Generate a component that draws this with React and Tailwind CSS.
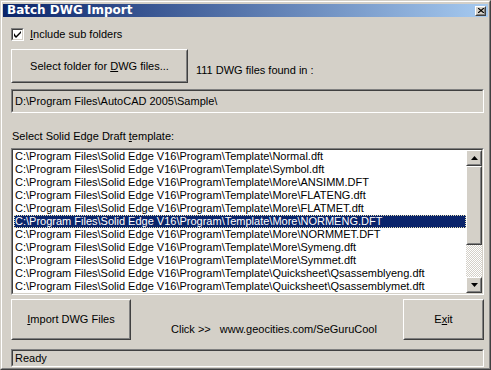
import React from 'react';

const files = [
  'C:\\Program Files\\Solid Edge V16\\Program\\Template\\Normal.dft',
  'C:\\Program Files\\Solid Edge V16\\Program\\Template\\Symbol.dft',
  'C:\\Program Files\\Solid Edge V16\\Program\\Template\\More\\ANSIMM.DFT',
  'C:\\Program Files\\Solid Edge V16\\Program\\Template\\More\\FLATENG.dft',
  'C:\\Program Files\\Solid Edge V16\\Program\\Template\\More\\FLATMET.dft',
  'C:\\Program Files\\Solid Edge V16\\Program\\Template\\More\\NORMENG.DFT',
  'C:\\Program Files\\Solid Edge V16\\Program\\Template\\More\\NORMMET.DFT',
  'C:\\Program Files\\Solid Edge V16\\Program\\Template\\More\\Symeng.dft',
  'C:\\Program Files\\Solid Edge V16\\Program\\Template\\More\\Symmet.dft',
  'C:\\Program Files\\Solid Edge V16\\Program\\Template\\Quicksheet\\Qsassemblyeng.dft',
  'C:\\Program Files\\Solid Edge V16\\Program\\Template\\Quicksheet\\Qsassemblymet.dft',
];

// classic raised 3d box
const Raised = ({ className = '', children }) => (
  <div className={'border border-t-white border-l-white border-r-[#404040] border-b-[#404040] ' + className}>
    <div className="w-full h-full border border-t-[#d4d0c8] border-l-[#d4d0c8] border-r-[#808080] border-b-[#808080] flex items-center justify-center">
      {children}
    </div>
  </div>
);

const Sunken = ({ className = '', inner = '', children }) => (
  <div className={'border border-t-[#808080] border-l-[#808080] border-r-white border-b-white ' + className}>
    <div className={'w-full h-full border border-t-[#404040] border-l-[#404040] border-r-[#d4d0c8] border-b-[#d4d0c8] ' + inner}>
      {children}
    </div>
  </div>
);

const Arrow = ({ up }) => (
  <Raised className="w-[16px] h-[16px] bg-[#d4d0c8]">
    <svg width="7" height="4" viewBox="0 0 7 4">
      {up ? <path d="M3.5 0 L7 4 L0 4 Z" fill="#000" /> : <path d="M0 0 L7 0 L3.5 4 Z" fill="#000" />}
    </svg>
  </Raised>
);

export default function App() {
  return (
    <div className="w-[491px] h-[370px] bg-[#d4d0c8] text-black text-[11px] leading-[13px] select-none" style={{ fontFamily: '"Liberation Sans", Arial, sans-serif' }}>
      <div className="w-full h-full border border-t-[#d4d0c8] border-l-[#d4d0c8] border-r-[#404040] border-b-[#404040]">
        <div className="w-full h-full border border-t-white border-l-white border-r-[#808080] border-b-[#808080] p-px flex flex-col">
          {/* title bar */}
          <div className="h-[16px] mt-px flex items-center justify-between pl-[4px] pr-[2px] bg-[linear-gradient(to_right,#0a246a,#a6caf0)]">
            <span className="text-white font-bold text-[12px]" style={{ fontFamily: '"DejaVu Sans", sans-serif' }}>Batch DWG Import</span>
            <Raised className="w-[11px] h-[10px] bg-[#d4d0c8]">
              <svg width="6" height="5" viewBox="0 0 6 5">
                <path d="M0 0 L6 5 M6 0 L0 5" stroke="#000" strokeWidth="1.2" />
              </svg>
            </Raised>
          </div>

          <div className="flex flex-col pl-[8px] pr-[4px]">
            {/* checkbox */}
            <div className="flex items-center mt-[11px] h-[13px]">
              <Sunken className="w-[13px] h-[13px]" inner="bg-white flex items-center justify-center">
                <svg width="7" height="7" viewBox="0 0 7 7">
                  <path d="M0 2 L0 5 L2 7 L7 2 L7 0 L2 5 Z" fill="#000" />
                </svg>
              </Sunken>
              <span className="ml-[6px]"><u>I</u>nclude sub folders</span>
            </div>

            {/* select folder */}
            <div className="flex items-end mt-[8px]">
              <Raised className="w-[177px] h-[34px]">
                <span>Select folder for <u>D</u>WG files...</span>
              </Raised>
              <span className="ml-[8px] mb-[6px]">111 DWG files found in :</span>
            </div>

            <Sunken className="mt-[6px] h-[24px]" inner="flex items-center pl-[2px]">
              <span>D:\Program Files\AutoCAD 2005\Sample\</span>
            </Sunken>

            <div className="mt-[17px] pl-px">Select Solid Edge Draft <u>t</u>emplate:</div>

            <Sunken className="mt-[5px] h-[147px]" inner="bg-white flex">
              <div className="flex-1 flex flex-col pl-px">
                {files.map((f, i) => (
                  <div
                    key={i}
                    className={'h-[13px] pl-px whitespace-nowrap ' + (i === 5 ? 'bg-[#0a246a] text-white outline-1 outline-dotted outline-[#e8e0b0] -outline-offset-1' : '')}
                  >
                    {f}
                  </div>
                ))}
              </div>
              <div className="w-[16px] flex flex-col bg-[repeating-conic-gradient(#d4d0c8_0_25%,#ffffff_0_50%)] bg-[length:2px_2px]">
                <Arrow up />
                <Raised className="h-[79px] bg-[#d4d0c8]" />
                <div className="flex-1" />
                <Arrow />
              </div>
            </Sunken>

            {/* bottom buttons */}
            <div className="flex items-center mt-[4px]">
              <Raised className="w-[120px] h-[41px]">
                <span><u>I</u>mport DWG Files</span>
              </Raised>
              <div className="flex-1 flex mt-[20px] pl-[40px]">
                <span>Click &gt;&gt;</span>
                <span className="ml-[9px]">www.geocities.com/SeGuruCool</span>
              </div>
              <Raised className="w-[81px] h-[41px]">
                <span>E<u>x</u>it</span>
              </Raised>
            </div>

            <Sunken className="mt-[9px] h-[18px]" inner="flex items-center pl-[2px]">
              <span>Ready</span>
            </Sunken>
          </div>
        </div>
      </div>
    </div>
  );
}
